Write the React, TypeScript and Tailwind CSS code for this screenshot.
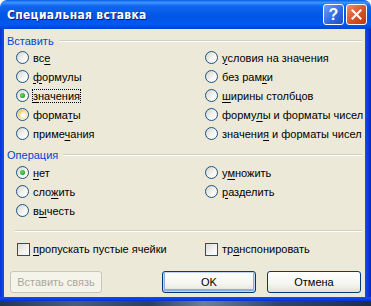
import React from "react";

const FONT = "font-['Liberation_Sans',Arial,sans-serif]";

function Radio({ checked, hover }: { checked?: boolean; hover?: boolean }) {
  return (
    <span className="relative flex h-[13px] w-[13px] shrink-0 items-center justify-center rounded-full border border-[#1C5180] bg-[linear-gradient(135deg,#D4D4CE_0%,#F4F4F0_55%,#FFFFFF_100%)]">
      {hover && (
        <span className="absolute inset-[1px] rounded-full bg-[radial-gradient(circle_at_60%_60%,#FFFFFF_15%,#F9D880_55%,#E9A021_100%)]" />
      )}
      {checked && (
        <span className="relative h-[5px] w-[5px] rounded-full bg-[radial-gradient(circle_at_40%_40%,#7BD67B,#21A121_70%)]" />
      )}
    </span>
  );
}

function Check() {
  return (
    <span className="h-[13px] w-[13px] shrink-0 border border-[#1C5180] bg-[linear-gradient(135deg,#DCDCD7_0%,#F4F4F0_60%,#FFFFFF_100%)]" />
  );
}

function L({ a, u, b }: { a?: string; u: string; b?: string }) {
  return (
    <span className="whitespace-nowrap">
      {a}
      <span className="underline underline-offset-[2px]">{u}</span>
      {b}
    </span>
  );
}

function RadioRow({
  children,
  checked,
  hover,
  focus,
}: {
  children: React.ReactNode;
  checked?: boolean;
  hover?: boolean;
  focus?: boolean;
}) {
  return (
    <div className="flex h-[19px] items-center gap-[4px]">
      <Radio checked={checked} hover={hover} />
      <span
        className={
          focus
            ? "-ml-[1px] border border-dotted border-black leading-[12px]"
            : "leading-[12px]"
        }
      >
        {children}
      </span>
    </div>
  );
}

function GroupHeader({ title }: { title: string }) {
  return (
    <div className="flex h-[14px] items-center pr-[3px]">
      <span className="leading-[14px] text-[#0046D5]">{title}</span>
      <span className="ml-[5px] h-[2px] flex-1 border-t border-b border-t-[#D0D0BF] border-b-white" />
    </div>
  );
}

export default function App() {
  return (
    <div className={`flex h-[306px] w-[371px] flex-col ${FONT} text-[11px] text-black`}>
      {/* Title bar */}
      <div className="flex h-[29px] items-center rounded-t-[7px] bg-[linear-gradient(180deg,#0A5FE8_0%,#3D95FF_9%,#1167F0_20%,#0055E5_55%,#0158EE_85%,#0043D2_100%)] pl-[7px] pr-[4px]">
        <span className="flex-1 font-['Liberation_Sans_Narrow','DejaVu_Sans_Condensed',sans-serif] text-[12px] font-bold tracking-[0.3px] text-white [text-shadow:1px_1px_0_#0A1883]">
          Специальная вставка
        </span>
        <span className="flex h-[21px] w-[21px] items-center justify-center rounded-[3px] border border-white bg-[linear-gradient(135deg,#6FA0F8_0%,#2D66E3_60%,#1E50C8_100%)] text-[16px] font-bold leading-none text-white">
          ?
        </span>
        <span className="ml-[2px] flex h-[21px] w-[21px] items-center justify-center rounded-[3px] border border-white bg-[linear-gradient(135deg,#EE9070_0%,#D9552A_50%,#C0380F_100%)]">
          <svg width="11" height="11" viewBox="0 0 11 11">
            <path d="M1.5 1.5 L9.5 9.5 M9.5 1.5 L1.5 9.5" stroke="white" strokeWidth="2" strokeLinecap="square" />
          </svg>
        </span>
      </div>

      {/* Body */}
      <div className="flex h-[268px]">
        <div className="w-[4px] bg-[linear-gradient(90deg,#0831D9,#0C52E6)]" />
        <div className="flex flex-1 flex-col bg-[#ECE9D8] pl-[3px]">
          <div className="mt-[5px]">
            <GroupHeader title="Вставить" />
          </div>
          <div className="grid grid-cols-[189px_1fr] pl-[9px]">
            <div className="flex flex-col">
              <RadioRow>
                <L a="вс" u="е" />
              </RadioRow>
              <RadioRow>
                <L u="ф" b="ормулы" />
              </RadioRow>
              <RadioRow checked focus>
                <L u="з" b="начения" />
              </RadioRow>
              <RadioRow hover>
                <L a="форма" u="т" b="ы" />
              </RadioRow>
              <RadioRow>
                <L a="приме" u="ч" b="ания" />
              </RadioRow>
            </div>
            <div className="flex flex-col">
              <RadioRow>
                <L u="у" b="словия на значения" />
              </RadioRow>
              <RadioRow>
                <L a="без рам" u="к" b="и" />
              </RadioRow>
              <RadioRow>
                <L u="ш" b="ирины столбцов" />
              </RadioRow>
              <RadioRow>
                <L a="форму" u="л" b="ы и форматы чисел" />
              </RadioRow>
              <RadioRow>
                <L a="значени" u="я" b=" и форматы чисел" />
              </RadioRow>
            </div>
          </div>

          <div className="mt-[5px]">
            <GroupHeader title="Операция" />
          </div>
          <div className="mt-[1px] grid grid-cols-[189px_1fr] pl-[9px]">
            <div className="flex flex-col">
              <RadioRow checked>
                <L u="н" b="ет" />
              </RadioRow>
              <RadioRow>
                <L a="сло" u="ж" b="ить" />
              </RadioRow>
              <RadioRow>
                <L a="в" u="ы" b="честь" />
              </RadioRow>
            </div>
            <div className="flex flex-col">
              <RadioRow>
                <L a="у" u="м" b="ножить" />
              </RadioRow>
              <RadioRow>
                <L u="р" b="азделить" />
              </RadioRow>
            </div>
          </div>

          <div className="ml-[8px] mr-[3px] mt-[10px] h-[2px] border-t border-b border-t-[#D0D0BF] border-b-white" />

          <div className="mt-[8px] grid h-[19px] grid-cols-[189px_1fr] items-center pl-[10px]">
            <div className="flex items-center gap-[3px]">
              <Check />
              <L u="п" b="ропускать пустые ячейки" />
            </div>
            <div className="-ml-[1px] flex items-center gap-[4px]">
              <Check />
              <L a="тр" u="а" b="нспонировать" />
            </div>
          </div>

          <div className="mt-[12px] flex h-[22px] pl-[3px] pr-[4px]">
            <div className="flex w-[92px] items-center justify-center rounded-[3px] border border-[#C9C7BA] bg-[#F5F4EA] text-[#ACA899]">
              Вставить связь
            </div>
            <div className="flex-1" />
            <div className="flex w-[94px] items-center justify-center rounded-[3px] border border-[#003C74] bg-[linear-gradient(180deg,#FFFFFF_0%,#F4F4F0_60%,#E3E1D6_100%)] shadow-[inset_0_0_0_1px_#BCD4F6,inset_0_-1px_0_2px_#89ADE4]">
              OK
            </div>
            <div className="ml-[11px] flex w-[94px] items-center justify-center rounded-[3px] border border-[#003C74] bg-[linear-gradient(180deg,#FFFFFF_0%,#F4F4F0_60%,#E3E1D6_100%)]">
              Отмена
            </div>
          </div>
        </div>
        <div className="w-[6px] bg-[linear-gradient(90deg,#0C52E6,#0831D9_70%,#0A2AA8)]" />
      </div>
      <div className="h-[4px] bg-[linear-gradient(180deg,#0C52E6,#0831D9)]" />
      <div className="h-[5px] bg-[linear-gradient(90deg,#243650_0%,#4A5D78_20%,#2B3F5E_40%,#6E7F94_55%,#304566_75%,#1E2E4A_100%)]" />
    </div>
  );
}
